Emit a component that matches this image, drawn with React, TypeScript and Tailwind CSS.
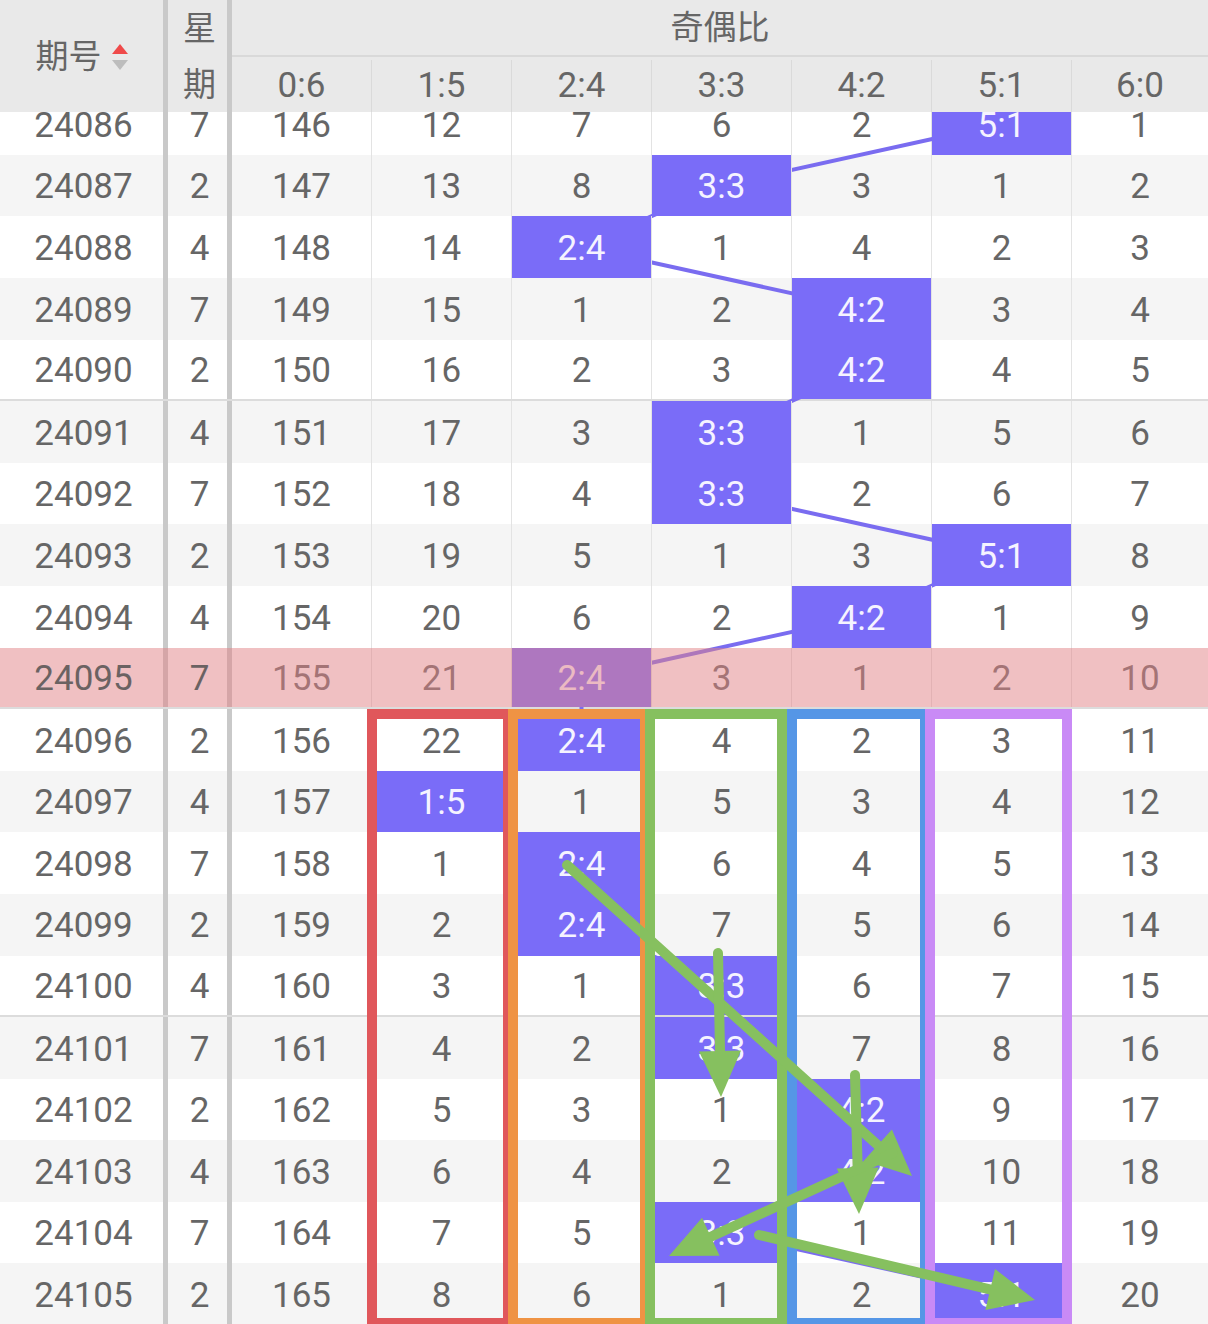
const ratios = ["0:6", "1:5", "2:4", "3:3", "4:2", "5:1", "6:0"];

// 0 marks the hit column for that draw
const rows: [number, number, number[]][] = [
  [24086, 7, [146, 12, 7, 6, 2, 0, 1]],
  [24087, 2, [147, 13, 8, 0, 3, 1, 2]],
  [24088, 4, [148, 14, 0, 1, 4, 2, 3]],
  [24089, 7, [149, 15, 1, 2, 0, 3, 4]],
  [24090, 2, [150, 16, 2, 3, 0, 4, 5]],
  [24091, 4, [151, 17, 3, 0, 1, 5, 6]],
  [24092, 7, [152, 18, 4, 0, 2, 6, 7]],
  [24093, 2, [153, 19, 5, 1, 3, 0, 8]],
  [24094, 4, [154, 20, 6, 2, 0, 1, 9]],
  [24095, 7, [155, 21, 0, 3, 1, 2, 10]],
  [24096, 2, [156, 22, 0, 4, 2, 3, 11]],
  [24097, 4, [157, 0, 1, 5, 3, 4, 12]],
  [24098, 7, [158, 1, 0, 6, 4, 5, 13]],
  [24099, 2, [159, 2, 0, 7, 5, 6, 14]],
  [24100, 4, [160, 3, 1, 0, 6, 7, 15]],
  [24101, 7, [161, 4, 2, 0, 7, 8, 16]],
  [24102, 2, [162, 5, 3, 1, 0, 9, 17]],
  [24103, 4, [163, 6, 4, 2, 0, 10, 18]],
  [24104, 7, [164, 7, 5, 0, 1, 11, 19]],
  [24105, 2, [165, 8, 6, 1, 2, 0, 20]],
];

const ROW_H = 61.6;
const HIGHLIGHT = 9;
const SEPARATORS = [4, 9, 14];
const GREEN = "#86c05f";

const SortIcon = () => (
  <svg width="16" height="26" viewBox="0 0 16 26">
    <polygon points="8,0 16,10 0,10" fill="#ef4a4a" />
    <polygon points="0,16 16,16 8,26" fill="#bdbdbd" />
  </svg>
);

const Arrow = ({ x1, y1, x2, y2 }: { x1: number; y1: number; x2: number; y2: number }) => {
  const len = Math.hypot(x2 - x1, y2 - y1);
  const ux = (x2 - x1) / len;
  const uy = (y2 - y1) / len;
  const bx = x2 - ux * 46;
  const by = y2 - uy * 46;
  const w = 21;
  return (
    <g>
      <line x1={x1} y1={y1} x2={bx + ux * 4} y2={by + uy * 4} stroke={GREEN} strokeWidth="10" strokeLinecap="round" />
      <polygon
        points={`${x2},${y2} ${bx - uy * w},${by + ux * w} ${bx + uy * w},${by - ux * w}`}
        fill={GREEN}
      />
    </g>
  );
};

const hitCol = (vals: number[]) => vals.indexOf(0);

export default function App() {
  const trend = rows.map((r, i) => `${301.5 + 140 * hitCol(r[2])},${ROW_H * i + ROW_H / 2}`).join(" ");

  return (
    <div className="relative h-[1324px] w-[1208px] overflow-hidden bg-white font-[Roboto,'Noto_Sans_CJK_SC',sans-serif] text-[#666]">
      {/* header */}
      <div className="relative z-30 flex h-[112px] bg-[#e9e9e9] text-[33px]">
        <div className="flex w-[168px] shrink-0 items-center justify-center gap-[10px] border-r-[5px] border-[#c9c9c9] pt-[2px]">
          <span>期号</span>
          <SortIcon />
        </div>
        <div className="flex w-[64px] shrink-0 flex-col border-r-[5px] border-[#c9c9c9] pl-[4px]">
          <div className="flex h-[57px] items-center justify-center">星</div>
          <div className="flex flex-1 items-center justify-center">期</div>
        </div>
        <div className="flex flex-1 flex-col">
          <div className="flex h-[57px] items-center justify-center border-b-2 border-[#d9d9d9]">奇偶比</div>
          <div className="flex flex-1 pt-[3px] text-[35px]">
            {ratios.map((r, k) => (
              <div
                key={r}
                className={
                  k < 6
                    ? "flex w-[140px] shrink-0 items-center justify-center border-r border-[#dadada]"
                    : "flex flex-1 items-center justify-center"
                }
              >
                {r}
              </div>
            ))}
          </div>
        </div>
      </div>

      {/* body, scrolled a little under the header */}
      <div className="h-[1212px] overflow-hidden">
        <div className="relative -mt-[18.8px] text-[35px]">
          {rows.map(([id, wk, vals], i) => {
            const pink = i === HIGHLIGHT;
            const bg = pink ? "bg-white" : i % 2 ? "bg-[#f5f5f5]" : "bg-white";
            const sep = SEPARATORS.includes(i) ? "border-b-2 border-[#dcdcdc]" : "";
            return (
              <div key={id} className={`relative flex h-[61.6px] ${bg} ${sep}`}>
                <div className="flex w-[168px] shrink-0 items-center justify-center border-r-[5px] border-[#c9c9c9] pl-[4px] pt-[4px]">
                  <span className={pink ? "relative z-30 text-[#6b6262]" : ""}>{id}</span>
                </div>
                <div className="flex w-[64px] shrink-0 items-center justify-center border-r-[5px] border-[#c9c9c9] pl-[4px] pt-[4px]">
                  <span className={pink ? "relative z-30 text-[#6b6262]" : ""}>{wk}</span>
                </div>
                {vals.map((v, k) => {
                  const last = k === 6;
                  const width = last ? "flex-1" : "w-[140px] shrink-0 border-r border-[#e3e3e3]";
                  return v === 0 ? (
                    <div
                      key={k}
                      className={`relative z-10 flex items-center justify-center bg-[#7a6cf8] pt-[4px] text-[#f5f3ff] ${width}`}
                    >
                      {ratios[k]}
                    </div>
                  ) : (
                    <div key={k} className={`flex items-center justify-center pt-[4px] ${width}`}>
                      {v}
                    </div>
                  );
                })}
                {pink && <div className="pointer-events-none absolute inset-0 z-20 bg-[#e18185]/50" />}
              </div>
            );
          })}
          <svg
            className="pointer-events-none absolute left-0 top-0 z-0"
            width="1208"
            height={ROW_H * rows.length}
          >
            <polyline points={trend} fill="none" stroke="#7a6cf0" strokeWidth="4" />
          </svg>
        </div>
      </div>

      {/* hand-drawn annotations */}
      <svg className="pointer-events-none absolute left-0 top-0 z-40" width="1208" height="1324">
        <g fill="none" strokeWidth="10">
          <rect x="372" y="714" width="136" height="609" stroke="#e0575b" />
          <rect x="513" y="714" width="132" height="609" stroke="#ef9344" />
          <rect x="650" y="714" width="132" height="609" stroke={GREEN} />
          <rect x="792" y="714" width="133" height="609" stroke="#5596e6" />
          <rect x="930" y="714" width="137" height="609" stroke="#c98af6" />
        </g>
        <Arrow x1={567} y1={865} x2={912} y2={1176} />
        <Arrow x1={718} y1={953} x2={721} y2={1097} />
        <Arrow x1={855} y1={1075} x2={859} y2={1214} />
        <Arrow x1={893} y1={1153} x2={669} y2={1256} />
        <Arrow x1={759} y1={1235} x2={1035} y2={1300} />
      </svg>
    </div>
  );
}
